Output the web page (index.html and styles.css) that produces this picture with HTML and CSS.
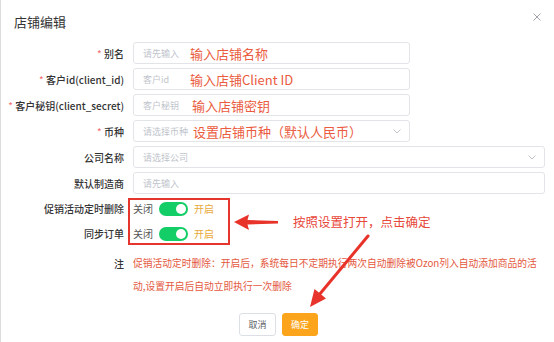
FILE: index.html
```html
<!DOCTYPE html>
<html lang="zh-CN">
<head>
<meta charset="utf-8">
<title>店铺编辑</title>
<link rel="stylesheet" href="styles.css">
</head>
<body>
<div class="dialog">
  <header class="head">
    <h1 class="title">店铺编辑</h1>
    <svg class="close" width="8" height="8" viewBox="0 0 8 8"><path d="M0.5 0.5L7.5 7.5M7.5 0.5L0.5 7.5" stroke="#a0a3a8" stroke-width="1" fill="none"/></svg>
  </header>
  <div class="form">
    <div class="row">
      <label class="label"><span class="req">*</span> 别名</label>
      <div class="input short"><span class="ph">请先输入</span><span class="mark">输入店铺名称</span></div>
    </div>
    <div class="row">
      <label class="label"><span class="req">*</span> 客户id(client_id)</label>
      <div class="input short"><span class="ph">客户id</span><span class="mark">输入店铺Client ID</span></div>
    </div>
    <div class="row">
      <label class="label"><span class="req">*</span> 客户秘钥(client_secret)</label>
      <div class="input short"><span class="ph ph-wide">客户秘钥</span><span class="mark">输入店铺密钥</span></div>
    </div>
    <div class="row">
      <label class="label"><span class="req">*</span> 币种</label>
      <div class="input short"><span class="ph ph-sel">请选择币种</span><span class="mark">设置店铺币种（默认人民币）</span><svg class="chev" width="8" height="5" viewBox="0 0 8 5"><path d="M0.5 0.5L4 4L7.5 0.5" stroke="#c0c4cc" stroke-width="1" fill="none"/></svg></div>
    </div>
    <div class="row">
      <label class="label">公司名称</label>
      <div class="input long"><span class="ph">请选择公司</span><svg class="chev" width="8" height="5" viewBox="0 0 8 5"><path d="M0.5 0.5L4 4L7.5 0.5" stroke="#c0c4cc" stroke-width="1" fill="none"/></svg></div>
    </div>
    <div class="row">
      <label class="label">默认制造商</label>
      <div class="input long"><span class="ph">请先输入</span></div>
    </div>
    <div class="row sw-row">
      <label class="label">促销活动定时删除</label>
      <div class="switch-line"><span class="off">关闭</span><span class="switch"><span class="knob"></span></span><span class="on">开启</span></div>
    </div>
    <div class="row sw-row">
      <label class="label">同步订单</label>
      <div class="switch-line"><span class="off">关闭</span><span class="switch"><span class="knob"></span></span><span class="on">开启</span></div>
    </div>
    <div class="row note-row">
      <label class="label note-label">注</label>
      <div class="note">
        <span class="note-line">促销活动定时删除：开启后，系统每日不定期执行两次自动删除被Ozon列入自动添加商品的活</span>
        <span class="note-line">动,设置开启后自动立即执行一次删除</span>
      </div>
    </div>
  </div>
  <footer class="foot">
    <button class="btn cancel" type="button">取消</button>
    <button class="btn ok" type="button">确定</button>
  </footer>

  <div class="redbox"></div>
  <div class="hint">按照设置打开，点击确定</div>
  <svg class="arrows" width="554" height="342" viewBox="0 0 554 342">
    <polygon points="233,222 248,214.5 246.5,220 277,221 277,223.5 246.5,224.5 248,230" fill="#e8332a"/>
    <line x1="367" y1="236" x2="318" y2="295" stroke="#e8332a" stroke-width="3" stroke-linecap="round"/>
    <polygon points="309,307 325,298.5 313.5,289" fill="#e8332a"/>
  </svg>
</div>
</body>
</html>
```
FILE: styles.css
```css
* { box-sizing: border-box; }
html, body { margin: 0; padding: 0; background: #fff; }
body {
  font-family: "Noto Sans CJK SC", "Noto Sans", sans-serif;
  color: #333;
}
.dialog {
  position: relative;
  width: 554px;
  height: 342px;
  border-left: 1px solid #dcdcdc;
  overflow: hidden;
}
.head {
  height: 42px;
  display: flex;
  justify-content: space-between;
  align-items: flex-start;
  padding: 12px 13px 0 13px;
}
.title {
  margin: 0;
  font-size: 13px;
  line-height: 20px;
  font-weight: normal;
  color: #333;
}
.close { margin-top: 1px; }
.form {
  display: flex;
  flex-direction: column;
  gap: 4px;
}
.row {
  display: grid;
  grid-template-columns: 123px 1fr;
  column-gap: 9px;
  height: 22px;
  align-items: center;
}
.sw-row { height: 21px; }
.label {
  text-align: right;
  font-size: 10px;
  font-weight: 500;
  color: #333;
  white-space: nowrap;
}
.req { color: #f56c6c; font-weight: normal; }
.input {
  height: 22px;
  display: flex;
  align-items: center;
  border: 1px solid #e2e4e8;
  border-radius: 3px;
  padding: 0 8px 0 9px;
  background: #fff;
}
.short { width: 277px; }
.long { width: 412px; }
.ph {
  font-size: 9px;
  color: #c0c4cc;
  width: 47px;
  flex: none;
  white-space: nowrap;
}
.ph-wide { width: 49px; }
.ph-sel { width: 50px; }
.mark {
  font-size: 13px;
  color: #ea5b40;
  white-space: nowrap;
  line-height: 1;
}
.chev { margin-left: auto; flex: none; }
.switch-line {
  display: flex;
  align-items: center;
  font-size: 10px;
}
.off { color: #555; }
.switch {
  width: 29px;
  height: 14px;
  margin: 0 6px;
  border-radius: 7px;
  background: #13ce66;
  position: relative;
}
.knob {
  position: absolute;
  right: 2px;
  top: 2px;
  width: 10px;
  height: 10px;
  border-radius: 50%;
  background: #fff;
}
.on { color: #e8a93a; }
.note-row { height: auto; align-items: start; margin-top: 4px; }
.note-label { line-height: 23px; }
.note {
  font-size: 9.75px;
  line-height: 23px;
  color: #e4583e;
}
.note-line { display: block; white-space: nowrap; }
.foot {
  display: flex;
  gap: 6px;
  padding-left: 238px;
  margin-top: 15px;
}
.btn {
  height: 23px;
  width: 37px;
  padding: 0;
  font-family: inherit;
  font-size: 9px;
  border-radius: 3px;
  cursor: pointer;
}
.cancel { background: #fff; border: 1px solid #dcdfe6; color: #606266; }
.ok { background: #fca51c; border: 1px solid #fca51c; color: #fff; width: 36px; }
.redbox {
  position: absolute;
  left: 127px;
  top: 198px;
  width: 102px;
  height: 47px;
  border: 2px solid #e5352c;
}
.hint {
  position: absolute;
  left: 292px;
  top: 213px;
  font-size: 12.5px;
  line-height: 18px;
  color: #e8473a;
  white-space: nowrap;
}
.arrows { position: absolute; left: 0; top: 0; pointer-events: none; }
```
